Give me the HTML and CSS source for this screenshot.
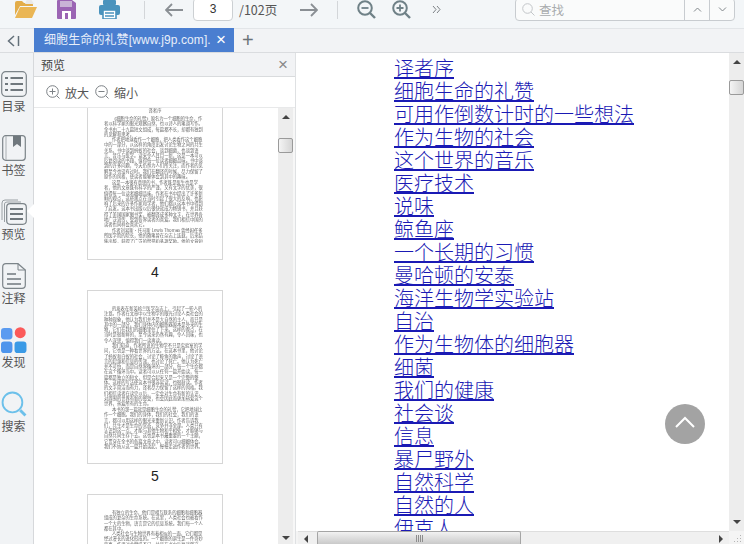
FILE: index.html
```html
<!DOCTYPE html>
<html lang="zh">
<head>
<meta charset="utf-8">
<title>细胞生命的礼赞</title>
<link rel="stylesheet" href="styles.css">
</head>
<body>
<div class="app">
  <header class="toolbar">
    <svg class="ico open" viewBox="0 0 24 20"><path d="M1 4 Q1 2 3 2 H8 L10 4 H18 Q19 4 19 6 V7 H6 L1 16Z" fill="#e3ad4a"/><path d="M6 8 H23 L18 19 H1Z" fill="#eab655"/><path d="M13 0 L17 0 L20 5 H11Z" fill="#e9e9e9"/></svg>
    <svg class="ico save" viewBox="0 0 19 19"><path d="M0 1 Q0 0 1 0 H15 L19 3 V18 Q19 19 18 19 H1 Q0 19 0 18Z" fill="#9b65b4"/><rect x="3" y="1" width="12" height="6" fill="#c9b3d6"/><rect x="5" y="11" width="9" height="8" fill="#fff"/><rect x="8" y="13" width="3" height="6" fill="#9b65b4"/></svg>
    <svg class="ico print" viewBox="0 0 21 19"><rect x="4" y="0" width="13" height="5" rx="1" fill="#4a93bd"/><rect x="0" y="5" width="21" height="10" rx="2" fill="#4a93bd"/><rect x="4" y="10" width="13" height="9" fill="#fff" stroke="#4a93bd" stroke-width="1.6"/><path d="M6 13H15M6 16H15" stroke="#4a93bd" stroke-width="1.4"/></svg>
    <span class="sep"></span>
    <svg class="ico arrow" viewBox="0 0 18 14"><path d="M7 1 L1 7 L7 13 M1 7 H18" fill="none" stroke="#8a8f94" stroke-width="1.8"/></svg>
    <span class="page-input">3</span>
    <span class="page-total">/102页</span>
    <svg class="ico arrow next" viewBox="0 0 18 14"><path d="M11 1 L17 7 L11 13 M17 7 H0" fill="none" stroke="#8a8f94" stroke-width="1.8"/></svg>
    <span class="sep sep-b"></span>
    <svg class="ico zoom" viewBox="0 0 19 19"><circle cx="8" cy="8" r="6.8" fill="none" stroke="#6f8187" stroke-width="2"/><path d="M13 13 L18 18" stroke="#6f8187" stroke-width="2.4"/><path d="M4.5 8H11.5" stroke="#6f8187" stroke-width="1.8"/></svg>
    <svg class="ico zoom zoom-in" viewBox="0 0 19 19"><circle cx="8" cy="8" r="6.8" fill="none" stroke="#6f8187" stroke-width="2"/><path d="M13 13 L18 18" stroke="#6f8187" stroke-width="2.4"/><path d="M4.5 8H11.5M8 4.5V11.5" stroke="#6f8187" stroke-width="1.8"/></svg>
    <svg class="ico more" viewBox="0 0 9 9"><path d="M1 1 L4 4.5 L1 8 M5 1 L8 4.5 L5 8" fill="none" stroke="#7c8185" stroke-width="1"/></svg>
    <div class="search">
      <svg class="search-ico" viewBox="0 0 13 13"><circle cx="5.5" cy="5.5" r="4.8" fill="none" stroke="#c3c6c9" stroke-width="1"/><path d="M9 9 L12.5 12.5" stroke="#c3c6c9" stroke-width="1"/></svg>
      <span class="search-text">查找</span>
      <span class="search-btn"><svg viewBox="0 0 9 5"><path d="M1 4.500 L4.500 1 L8 4.500" fill="none" stroke="#80868a" stroke-width="1"/></svg></span>
      <span class="search-btn"><svg viewBox="0 0 9 5"><path d="M1 .5 L4.500 4 L8 .5" fill="none" stroke="#80868a" stroke-width="1"/></svg></span>
    </div>
  </header>

  <nav class="tabbar">
    <svg class="collapse" viewBox="0 0 13 12"><path d="M7 1 L1.500 6 L7 11" fill="none" stroke="#64707a" stroke-width="1.500"/><path d="M11.500 1V11" stroke="#64707a" stroke-width="1.500"/></svg>
    <div class="tab"><span class="tab-title">细胞生命的礼赞[www.j9p.com].</span><span class="tab-x">×</span></div>
    <span class="tab-add">+</span>
  </nav>

  <div class="body">
    <aside class="rail">
      <div class="rail-item">
        <svg class="rail-ico" viewBox="0 0 26 26"><rect x=".7" y=".7" width="24.600" height="24.600" rx="4" fill="none" stroke="#7c8489" stroke-width="1.200"/><path d="M4 7H7M9.500 7H22M4 13H7M9.500 13H22M4 19H7M9.500 19H22" stroke="#70787d" stroke-width="1.800"/></svg>
        <span>目录</span>
      </div>
      <div class="rail-item">
        <svg class="rail-ico" viewBox="0 0 24 26"><rect x=".7" y=".7" width="22.600" height="24.600" rx="3" fill="none" stroke="#7c8489" stroke-width="1.200"/><path d="M4 1V25" stroke="#a9aeb2" stroke-width="1"/><path d="M11 1H19V12L15 9L11 12Z" fill="#70787d"/></svg>
        <span>书签</span>
      </div>
      <div class="rail-item">
        <svg class="rail-ico" viewBox="0 0 26 26"><path d="M1 21V4Q1 1 4 1H17M3.500 23V5Q3.500 3 6 3H20" fill="none" stroke="#9aa0a4" stroke-width="1"/><rect x="5.700" y="4.700" width="19.600" height="20.600" rx="3.500" fill="#f1f3f5" stroke="#7c8489" stroke-width="1.200"/><path d="M9 10H22M9 15H22M9 20H22" stroke="#70787d" stroke-width="1.800"/></svg>
        <span>预览</span>
      </div>
      <div class="rail-item">
        <svg class="rail-ico" viewBox="0 0 24 26"><path d="M4 .7H16L23.300 7V22Q23.300 25.300 20 25.300H4Q.7 25.300 .7 22V4Q.7 .7 4 .7Z" fill="none" stroke="#7c8489" stroke-width="1.200"/><path d="M16 .7V7H23.300" fill="none" stroke="#7c8489" stroke-width="1"/><path d="M5 11H14M5 16H19M5 21H19" stroke="#70787d" stroke-width="1.700"/></svg>
        <span>注释</span>
      </div>
      <div class="rail-item">
        <svg class="rail-ico" viewBox="0 0 25 25"><rect x="0" y="1" width="11" height="11" rx="3" fill="#5b9bf0"/><circle cx="18.500" cy="5.500" r="5.300" fill="#fb5a5a"/><rect x="0" y="14" width="11" height="11" rx="3" fill="#4f95ec"/><rect x="13" y="14" width="11.500" height="11" rx="3" fill="#3a9ae6"/></svg>
        <span>发现</span>
      </div>
      <div class="rail-item">
        <svg class="rail-ico" viewBox="0 0 25 25"><circle cx="11" cy="11" r="9.500" fill="none" stroke="#6cc0ea" stroke-width="1.800"/><path d="M18.500 18.500L23.500 23.500" stroke="#6cc0ea" stroke-width="2.800"/></svg>
        <span>搜索</span>
      </div>
    </aside>
    <span class="rail-notch"></span>

    <section class="panel">
      <div class="panel-head"><span>预览</span><span class="panel-x">×</span></div>
      <div class="panel-tools">
        <svg class="tool-ico" viewBox="0 0 14 14"><circle cx="6.500" cy="6.500" r="5.800" fill="none" stroke="#7c8185" stroke-width="1"/><path d="M3.500 6.500H9.500M6.500 3.500V9.500M10.700 10.700L13.500 13.500" fill="none" stroke="#7c8185" stroke-width="1"/></svg>
        <span>放大</span>
        <svg class="tool-ico tool-gap" viewBox="0 0 14 14"><circle cx="6.500" cy="6.500" r="5.800" fill="none" stroke="#7c8185" stroke-width="1"/><path d="M3.500 6.500H9.500M10.700 10.700L13.500 13.500" fill="none" stroke="#7c8185" stroke-width="1"/></svg>
        <span>缩小</span>
      </div>
      <div class="thumbs-wrap">
        <div class="thumbs">
          <div class="thumb-page first">
            <p class="t-title">译者序</p>
            <div class="thumb-text short">
              <p>《细胞生命的礼赞》原名为一个细胞的生命，作者以科学家的眼光观察自然，也以诗人的笔调写作。全书由二十九篇短文组成，每篇都不长，却都有独到的见解和思考。</p>
              <p>作者把地球看作一个细胞，把人类看作这个细胞中的一部分，从这样的角度出发讨论生物之间的共生关系。书中谈到蚂蚁的社会，谈到细菌，也谈到语言、音乐与医学。读来令人耳目一新，这是一本可以反复阅读的书籍，值得每一位读者细细品味。书中谈到的许多问题，今天仍然为人们所关注，而作者的见解至今也没有过时。我们在翻译的时候，尽力保留了原作的风格，使读者能够体会到其中的趣味。</p>
              <p>这是一本很有意思的书，作者既是医生也是学者，他的文章既有科学的严谨，又有文学的优美，很值得每一位读者细细品味。作者在书中提出了许多新鲜的观点，这些观点在当时引起了很大的反响，也影响了后来的许多作家和学者，他们都从这本书中得到了启发。这本书出版以后很快就成为畅销书，并且获得了美国国家图书奖，被翻译成多种文字，在世界各地广泛流传，受到各界读者的喜爱。我们相信中国的读者也同样会喜欢它。</p>
              <p>作者刘易斯·托马斯 Lewis Thomas 曾经担任多所医学院的院长，他的随笔曾在杂志上连载，后来结集出版，获得了广泛的赞誉和多项奖励。他的文章短小精悍，语言幽默，视野开阔，读来令人回味无穷。他相信科学与人文并不矛盾。</p>
            </div>
          </div>
          <div class="thumb-num">4</div>
          <div class="thumb-page">
            <div class="thumb-text">
              <p>的发表在新英格兰医学杂志上，引起了一些人的注意。作者在文章中以生物学的眼光讨论人类社会的种种现象，他认为我们并不是大自然的主人，而只是其中的一部分，我们身体内的细胞器原本是外来的生物，它们在我们的细胞里住了下来。这样的观点，在当时是很新鲜的，至今读来仍然有趣，令人回味，也令人深思，值得我们一读再读。</p>
              <p>我们知道，作者所说的生物学不只是实验室的学问，它也是一种看世界的方法。在这本书里，他讨论了蚂蚁和白蚁的社会，讨论了鲸鱼的歌声，讨论了语言的起源和信息的传递，也讨论了死亡。他认为死亡并不可怕，而是自然界循环的一部分，每一个生命都在这个循环当中。读者可以从任何一篇开始读，每一篇都是独立的短文，但是合起来又是一个完整的整体。这样的写法使这本书很容易读，也很耐读。作者的文字简洁而有力，译者尽力保留了这样的风格。我们相信读者在读完以后，一定会对生命有新的认识，对周围的世界有新的感受，也会因此而更加热爱这个世界，热爱所有的生命。</p>
              <p>本书的第一篇就是细胞生命的礼赞，它把地球比作一个细胞。我们的身体，我们的社会，我们的语言，都可以用这样的眼光来重新认识。作者告诉我们，共生才是生命的常态，竞争并非全部。人类只有认识到这一点，才能与其他生物和平相处，才能够与自然共同生存下去。这也是本书最重要的一个主题，它贯穿在全书的各篇文章之中，读者可以细细体会。我们不妨从这一篇开始读起，慢慢走进作者的世界。</p>
            </div>
          </div>
          <div class="thumb-num">5</div>
          <div class="thumb-page">
            <div class="thumb-text">
              <p>有独立的生命，他们是相互联系的细胞和细胞器组成的复杂的生命系统。在这里，人类社会也被看作一个大的生物，语言是它的信息系统。我们每一个人都在其中。</p>
              <p>人类社会与生物世界有着相似的一面，它们都是经过漫长的进化形成的。一个细胞的诞生是一件奇妙的事，作者对此赞叹不已，并且在书中反复谈到这一点。</p>
            </div>
          </div>
        </div>
        <div class="vscroll thumb-scroll"><span class="up"></span><span class="grip"></span><span class="down"></span></div>
      </div>
    </section>

    <main class="doc">
      <div class="doc-view">
        <ul class="toc">
          <li><a href="#">译者序</a></li>
          <li><a href="#">细胞生命的礼赞</a></li>
          <li><a href="#">可用作倒数计时的一些想法</a></li>
          <li><a href="#">作为生物的社会</a></li>
          <li><a href="#">这个世界的音乐</a></li>
          <li><a href="#">医疗技术</a></li>
          <li><a href="#">说味</a></li>
          <li><a href="#">鲸鱼座</a></li>
          <li><a href="#">一个长期的习惯</a></li>
          <li><a href="#">曼哈顿的安泰</a></li>
          <li><a href="#">海洋生物学实验站</a></li>
          <li><a href="#">自治</a></li>
          <li><a href="#">作为生物体的细胞器</a></li>
          <li><a href="#">细菌</a></li>
          <li><a href="#">我们的健康</a></li>
          <li><a href="#">社会谈</a></li>
          <li><a href="#">信息</a></li>
          <li><a href="#">暴尸野外</a></li>
          <li><a href="#">自然科学</a></li>
          <li><a href="#">自然的人</a></li>
          <li><a href="#">伊克人</a></li>
        </ul>
        <div class="vscroll doc-scroll"><span class="up"></span><span class="grip"></span><span class="down"></span></div>
        <button class="to-top" type="button"><svg viewBox="0 0 20 12"><path d="M1 11 L10 2 L19 11" fill="none" stroke="#fff" stroke-width="2"/></svg></button>
      </div>
      <div class="hscroll-row">
        <div class="hscroll"><span class="left"></span><span class="h-grip"></span><span class="right"></span></div>
        <svg class="resize" viewBox="0 0 9 9"><path d="M7 1h1v1H7zM4 4h1v1H4zM7 4h1v1H7zM1 7h1v1H1zM4 7h1v1H4zM7 7h1v1H7z" fill="#b5b5b5"/></svg>
      </div>
    </main>
  </div>
</div>
</body>
</html>
```

FILE: styles.css
```css
* { box-sizing: border-box; }
html, body { margin: 0; padding: 0; }
body {
  width: 744px;
  height: 544px;
  overflow: hidden;
  background: #fff;
  font-family: "Noto Sans CJK SC", "Liberation Sans", sans-serif;
  color: #444;
}
.app { width: 744px; height: 544px; display: flex; flex-direction: column; }

/* top toolbar */
.toolbar {
  flex: 0 0 29px;
  height: 29px;
  display: flex;
  align-items: center;
  background: #f3f6f8;
  border-bottom: 1px solid #e2e5e8;
  padding-left: 14px;
  overflow: hidden;
}
.ico { flex: none; display: block; }
.open { width: 24px; height: 20px; margin-top: -10px; }
.save { width: 19px; height: 19px; margin-left: 19px; margin-top: -9px; }
.print { width: 21px; height: 19px; margin-left: 23px; margin-top: -9px; }
.sep { flex: none; width: 1px; height: 18px; background: #d3d6d9; margin-left: 24px; margin-top: -9px; }
.arrow { width: 18px; height: 14px; margin-left: 20px; margin-top: -8px; }
.page-input {
  flex: none;
  width: 40px;
  height: 23px;
  margin: -9px 0 0 10px;
  background: #fff;
  border: 1px solid #ccd0d3;
  border-radius: 4px;
  text-align: center;
  font: 12px/21px "Liberation Sans", sans-serif;
  color: #333;
}
.page-total { flex: none; margin: -8px 0 0 6px; font-size: 12.5px; line-height: 18px; color: #555; width: 48px; white-space: nowrap; }
.arrow.next { margin-left: 13px; }
.sep-b { margin-left: 19px; }
.zoom { width: 19px; height: 19px; margin-left: 19px; margin-top: -9px; }
.zoom-in { margin-left: 16px; }
.more { width: 9px; height: 9px; margin-left: 21px; margin-top: -9px; }
.search {
  margin: -9px 9px 0 auto;
  width: 220px;
  height: 23px;
  display: flex;
  align-items: center;
  background: #fafbfb;
  border: 1px solid #c8ccd0;
  border-radius: 4px;
  padding-left: 6px;
}
.search-ico { width: 13px; height: 13px; flex: none; }
.search-text { margin-left: 4px; font-size: 12.5px; color: #a9acae; flex: 1; }
.search-btn {
  width: 25px;
  height: 21px;
  border-left: 1px solid #c8ccd0;
  display: flex;
  align-items: center;
  justify-content: center;
  flex: none;
}
.search-btn svg { width: 9px; height: 5px; display: block; }

/* tab bar */
.tabbar {
  flex: 0 0 23px;
  display: flex;
  align-items: stretch;
  background: #f2f3f5;
}
.collapse { width: 13px; height: 12px; margin: 6px 0 0 7px; flex: none; }
.tab {
  margin: -1px 0 0 14px;
  width: 200px;
  background: #4a7ed0;
  color: #e8effa;
  font-family: "Liberation Sans", "Noto Sans CJK SC", sans-serif;
  font-size: 12px;
  line-height: 24px;
  display: flex;
  padding-left: 10px;
  white-space: nowrap;
  overflow: hidden;
}
.tab-title { width: 168px; overflow: hidden; flex: none; letter-spacing: .1px; }
.tab-x { margin-left: 4px; font: 17px/24px "Liberation Sans", sans-serif; color: #fff; }
.tab-add { margin-left: 8px; font: 20px/23px "Liberation Sans", sans-serif; color: #6b7278; }

/* main area */
.body { flex: 1; min-height: 0; display: flex; position: relative; border-top: 1px solid #dadcdf; }
.rail {
  flex: 0 0 34px;
  background: #f1f3f5;
  border-right: 1px solid #d6d8db;
  display: flex;
  flex-direction: column;
  align-items: flex-start;
  padding-top: 18px;
  gap: 21px;
}
.rail-item { display: flex; flex-direction: column; align-items: center; height: 43px; width: 27px; }
.rail-ico { width: 26px; height: 26px; flex: none; display: block; }
.rail-item span { font-size: 12px; line-height: 17px; color: #555; white-space: nowrap; }
.rail-notch {
  position: absolute;
  left: 27px;
  top: 151px;
  width: 7px;
  height: 14px;
  background: #fff;
  clip-path: polygon(100% 0, 0 50%, 100% 100%);
}

/* preview panel */
.panel { flex: 0 0 262px; display: flex; flex-direction: column; border-right: 1px solid #dfe1e3; min-height: 0; }
.panel-head {
  flex: 0 0 24px;
  background: #f2f3f5;
  border-bottom: 1px solid #d9dbdd;
  display: flex;
  justify-content: space-between;
  padding: 0 7px 0 7px;
  font-size: 12px;
  line-height: 23px;
  color: #444;
}
.panel-x { font: 17px/23px "Liberation Sans", sans-serif; color: #888; }
.panel-tools {
  flex: 0 0 31px;
  display: flex;
  align-items: center;
  padding: 0 0 0 12px;
  border-bottom: 1px solid #e8e9ea;
  font-size: 12px;
  color: #555;
}
.tool-ico { width: 14px; height: 14px; margin-right: 5px; flex: none; }
.tool-gap { margin-left: 6px; }
.thumbs-wrap { flex: 1; min-height: 0; display: flex; overflow: hidden; }
.thumbs { flex: 1; min-width: 0; overflow: hidden; padding-left: 53px; }
.thumb-page {
  width: 136px;
  height: 174px;
  border: 1px solid #d6d6d6;
  background: #fff;
  padding: 15px 16px 0;
  overflow: hidden;
}
.thumb-page.first { margin-top: -22px; padding-top: 21px; }
.thumb-text { height: 143px; overflow: hidden; }
.thumb-text.short { height: 127px; }
.thumb-page p {
  margin: 0;
  font-size: 4.300px;
  line-height: 5.300px;
  color: #666;
  text-indent: 8px;
  will-change: transform;
}
.thumb-page .t-title { text-align: center; text-indent: 0; margin-bottom: 3px; }
.thumb-num {
  width: 136px;
  height: 30px;
  padding-top: 2px;
  text-align: center;
  font: 14px/20px "Liberation Sans", sans-serif;
  color: #222;
}

/* scrollbars */
.vscroll { flex: none; width: 15px; background: #ededed; position: relative; }
.thumb-scroll { width: 17px; border-right: 2px solid #f7f7f7; }
.vscroll .up, .vscroll .down { position: absolute; left: 4px; width: 0; height: 0; border-left: 4px solid transparent; border-right: 4px solid transparent; }
.vscroll .up { top: 7px; border-bottom: 4px solid #444; }
.vscroll .down { bottom: 4px; border-top: 4px solid #444; }
.vscroll .grip {
  position: absolute;
  left: 0;
  top: 30px;
  width: 15px;
  height: 15px;
  border: 1px solid #9a9a9a;
  border-radius: 2px;
  background: linear-gradient(90deg, #f4f4f4, #d5d5d5);
}
.doc { flex: 1; min-width: 0; display: flex; flex-direction: column; }
.doc-view { flex: 1; min-height: 0; display: flex; position: relative; }
.toc {
  flex: 1;
  min-width: 0;
  list-style: none;
  margin: 0;
  padding: 3px 0 0 98px;
  overflow: hidden;
  font-size: 20px;
  font-weight: 300;
  line-height: 23px;
}
.toc a { color: #1a1ab4; text-decoration: underline; }
.doc-scroll .grip { top: 27px; }
.doc-scroll .down { bottom: 7px; }
.to-top {
  position: absolute;
  left: 369px;
  top: 351px;
  width: 40px;
  height: 40px;
  border: 0;
  border-radius: 50%;
  background: #a3a3a3;
  padding: 0;
  display: flex;
  align-items: center;
  justify-content: center;
}
.to-top svg { width: 20px; height: 12px; display: block; margin-top: -4px; }
.hscroll-row { flex: 0 0 13px; display: flex; background: #f4f4f4; }
.hscroll {
  flex: 1;
  min-width: 0;
  background: #f0f0f0;
  border-top: 1px solid #dedede;
  position: relative;
  margin-left: 2px;
}
.hscroll .left { position: absolute; left: 6px; top: 3px; border-top: 4px solid transparent; border-bottom: 4px solid transparent; border-right: 4px solid #444; }
.hscroll .right { position: absolute; right: 6px; top: 3px; border-top: 4px solid transparent; border-bottom: 4px solid transparent; border-left: 4px solid #444; }
.h-grip {
  position: absolute;
  left: 19px;
  top: -1px;
  width: 204px;
  height: 14px;
  border: 1px solid #a5a5a5;
  border-bottom: 0;
  border-radius: 2px 2px 0 0;
  background:
    repeating-linear-gradient(90deg, #8c8c8c 0 1px, transparent 1px 2px) 98px 3px / 7px 7px no-repeat,
    linear-gradient(180deg, #f2f2f2, #c6c6c6);
}
.resize { flex: 0 0 15px; width: 15px; height: 13px; padding: 3px 2px 1px 4px; display: block; }
```
